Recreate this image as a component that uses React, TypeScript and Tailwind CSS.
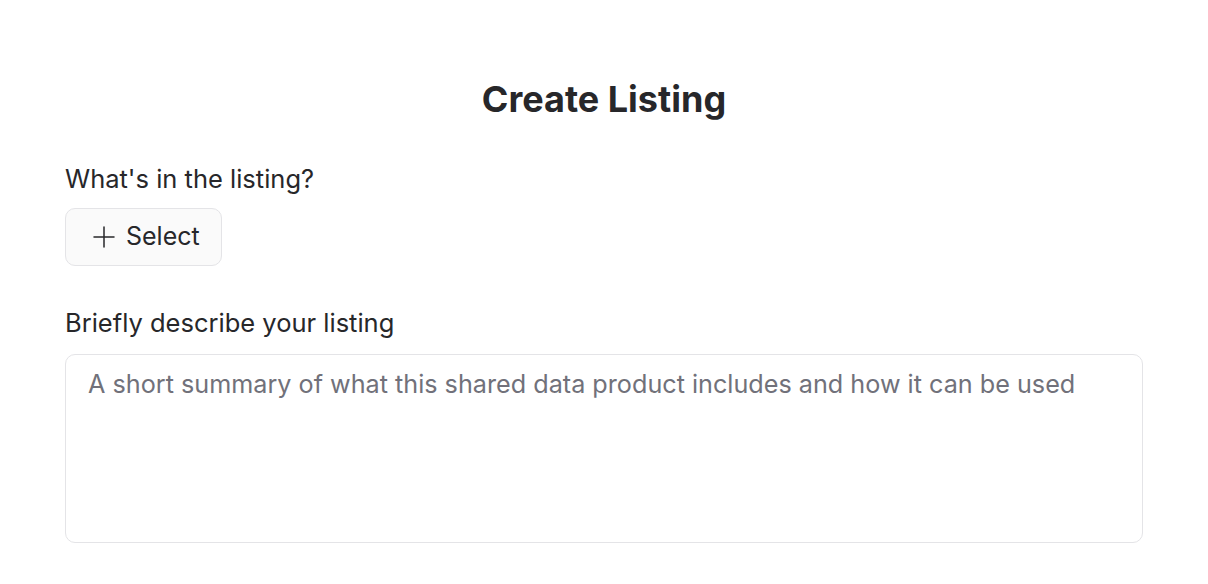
import React from "react";

export default function App() {
  return (
    <div className="min-h-screen bg-white font-['Inter',sans-serif] text-[#27272a]">
      <div className="px-[65px] pt-[74px]">
        <h1 className="text-center text-[36px] font-bold leading-[50px]">
          Create Listing
        </h1>

        {/* Contents */}
        <div className="mt-[38px]">
          <label className="block text-[25.5px] leading-[34px]">
            What's in the listing?
          </label>
          <button className="mt-[12px] flex h-[58px] w-[157px] items-center gap-[10px] rounded-[10px] border border-[#e4e4e7] bg-[#fafafa] pl-[26px] text-[25px] text-[#27272a]">
            <svg width="24" height="24" viewBox="0 0 24 24" fill="none" stroke="currentColor" strokeWidth="1.5" strokeLinecap="round">
              <path d="M12 2v20M2 12h20" />
            </svg>
            Select
          </button>
        </div>

        {/* Description */}
        <div className="mt-[40px]">
          <label className="block text-[25.5px] leading-[34px]">
            Briefly describe your listing
          </label>
          <textarea
            className="mt-[14px] block h-[189px] w-full resize-none rounded-[10px] border border-[#e4e4e7] bg-white px-[22px] py-[11px] text-[25.2px] leading-[36px] text-[#27272a] placeholder:text-[#71717a] focus:outline-none"
            placeholder="A short summary of what this shared data product includes and how it can be used"
          />
        </div>
      </div>
    </div>
  );
}
